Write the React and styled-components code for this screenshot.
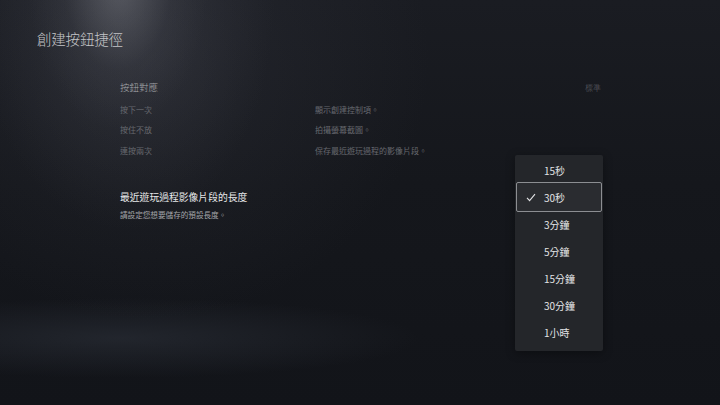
import React from "react";
import styled, { createGlobalStyle } from "styled-components";

const Global = createGlobalStyle`
  html, body { margin: 0; padding: 0; background: #14161b; }
  #root { width: 720px; height: 405px; }
  * { box-sizing: border-box; }
`;

const Page = styled.div`
  position: relative;
  width: 720px;
  height: 405px;
  overflow: hidden;
  font-family: "Noto Sans CJK TC", "Noto Sans", sans-serif;
  background:
    radial-gradient(ellipse 90px 150px at 118px -20px, rgba(170,172,180,0.32), rgba(90,92,102,0.12) 60%, rgba(0,0,0,0) 100%),
    radial-gradient(ellipse 150px 230px at 125px 0px, rgba(90,92,102,0.28), rgba(0,0,0,0) 100%),
    radial-gradient(ellipse 280px 260px at 150px 60px, rgba(60,62,72,0.3), rgba(0,0,0,0) 100%),
    radial-gradient(ellipse 300px 40px at 120px 338px, rgba(62,68,80,0.35), rgba(0,0,0,0) 100%),
    linear-gradient(180deg, #1a1c22 0%, #15171c 45%, #121419 100%);
  display: flex;
  flex-direction: column;
`;

const Title = styled.h1`
  margin: 0;
  padding: 29px 0 0 37px;
  font-size: 14.5px;
  line-height: 20px;
  font-weight: 300;
  color: #c4c5c8;
  letter-spacing: -0.2px;
`;

const Content = styled.div`
  margin-left: 120px;
  width: 481px;
  display: flex;
  flex-direction: column;
`;

const Section = styled.section`
  margin-top: 31px;
  display: flex;
  flex-direction: column;
`;

const SectionHead = styled.div`
  display: flex;
  justify-content: space-between;
  align-items: center;
  height: 14px;
  margin-bottom: 5px;
`;

const SectionTitle = styled.span`
  font-size: 9.5px;
  font-weight: 300;
  color: #a6a8ac;
`;

const Tag = styled.span`
  font-size: 8px;
  font-weight: 300;
  color: #62646a;
`;

const MapRow = styled.div`
  display: grid;
  grid-template-columns: 195px 1fr;
  height: 20.5px;
  align-items: center;
  font-size: 8px;
  color: #66686e;
`;

const Setting = styled.div`
  margin-top: 29px;
  display: flex;
  flex-direction: column;
  gap: 4px;
`;

const SettingLabel = styled.div`
  font-size: 9.8px;
  line-height: 14px;
  color: #e8e9ea;
`;

const SettingDesc = styled.div`
  font-size: 7.6px;
  line-height: 14px;
  color: #a4a6aa;
`;

const Menu = styled.ul`
  position: absolute;
  left: 515px;
  top: 155px;
  width: 88px;
  margin: 0;
  padding: 2px 0 5px;
  list-style: none;
  background: #24262a;
  border-radius: 2px;
  box-shadow: 0 2px 10px rgba(0,0,0,0.35);
`;

const Item = styled.li`
  position: relative;
  height: 27px;
  display: flex;
  align-items: center;
  padding-left: 29px;
  font-size: 10px;
  color: #e2e3e5;
  ${(p) =>
    p.$selected &&
    `
    &::before {
      content: "";
      position: absolute;
      left: 1px;
      right: 1px;
      top: -2px;
      bottom: -1px;
      border: 1px solid #8c8e92;
      border-radius: 2px;
      background: rgba(255,255,255,0.03);
    }
  `}
`;

const Check = styled.svg`
  position: absolute;
  left: 11px;
  top: 9px;
  width: 10px;
  height: 9px;
`;

const Label = styled.span`
  position: relative;
`;

const rows = [
  ["按下一次", "顯示創建控制項。"],
  ["按住不放", "拍攝螢幕截圖。"],
  ["連按兩次", "保存最近遊玩過程的影像片段。"],
];

const options = ["15秒", "30秒", "3分鐘", "5分鐘", "15分鐘", "30分鐘", "1小時"];

export default function App() {
  return (
    <>
      <Global />
      <Page>
        <Title>創建按鈕捷徑</Title>
        <Content>
          <Section>
            <SectionHead>
              <SectionTitle>按鈕對應</SectionTitle>
              <Tag>標準</Tag>
            </SectionHead>
            {rows.map(([a, b]) => (
              <MapRow key={a}>
                <span>{a}</span>
                <span>{b}</span>
              </MapRow>
            ))}
          </Section>
          <Setting>
            <SettingLabel>最近遊玩過程影像片段的長度</SettingLabel>
            <SettingDesc>請設定您想要儲存的預設長度。</SettingDesc>
          </Setting>
        </Content>
        <Menu>
          {options.map((o) => (
            <Item key={o} $selected={o === "30秒"}>
              {o === "30秒" && (
                <Check viewBox="0 0 10 9">
                  <polyline points="1,4.8 3.6,7.6 9,1.2" fill="none" stroke="#e2e3e5" strokeWidth="1.1" />
                </Check>
              )}
              <Label>{o}</Label>
            </Item>
          ))}
        </Menu>
      </Page>
    </>
  );
}
